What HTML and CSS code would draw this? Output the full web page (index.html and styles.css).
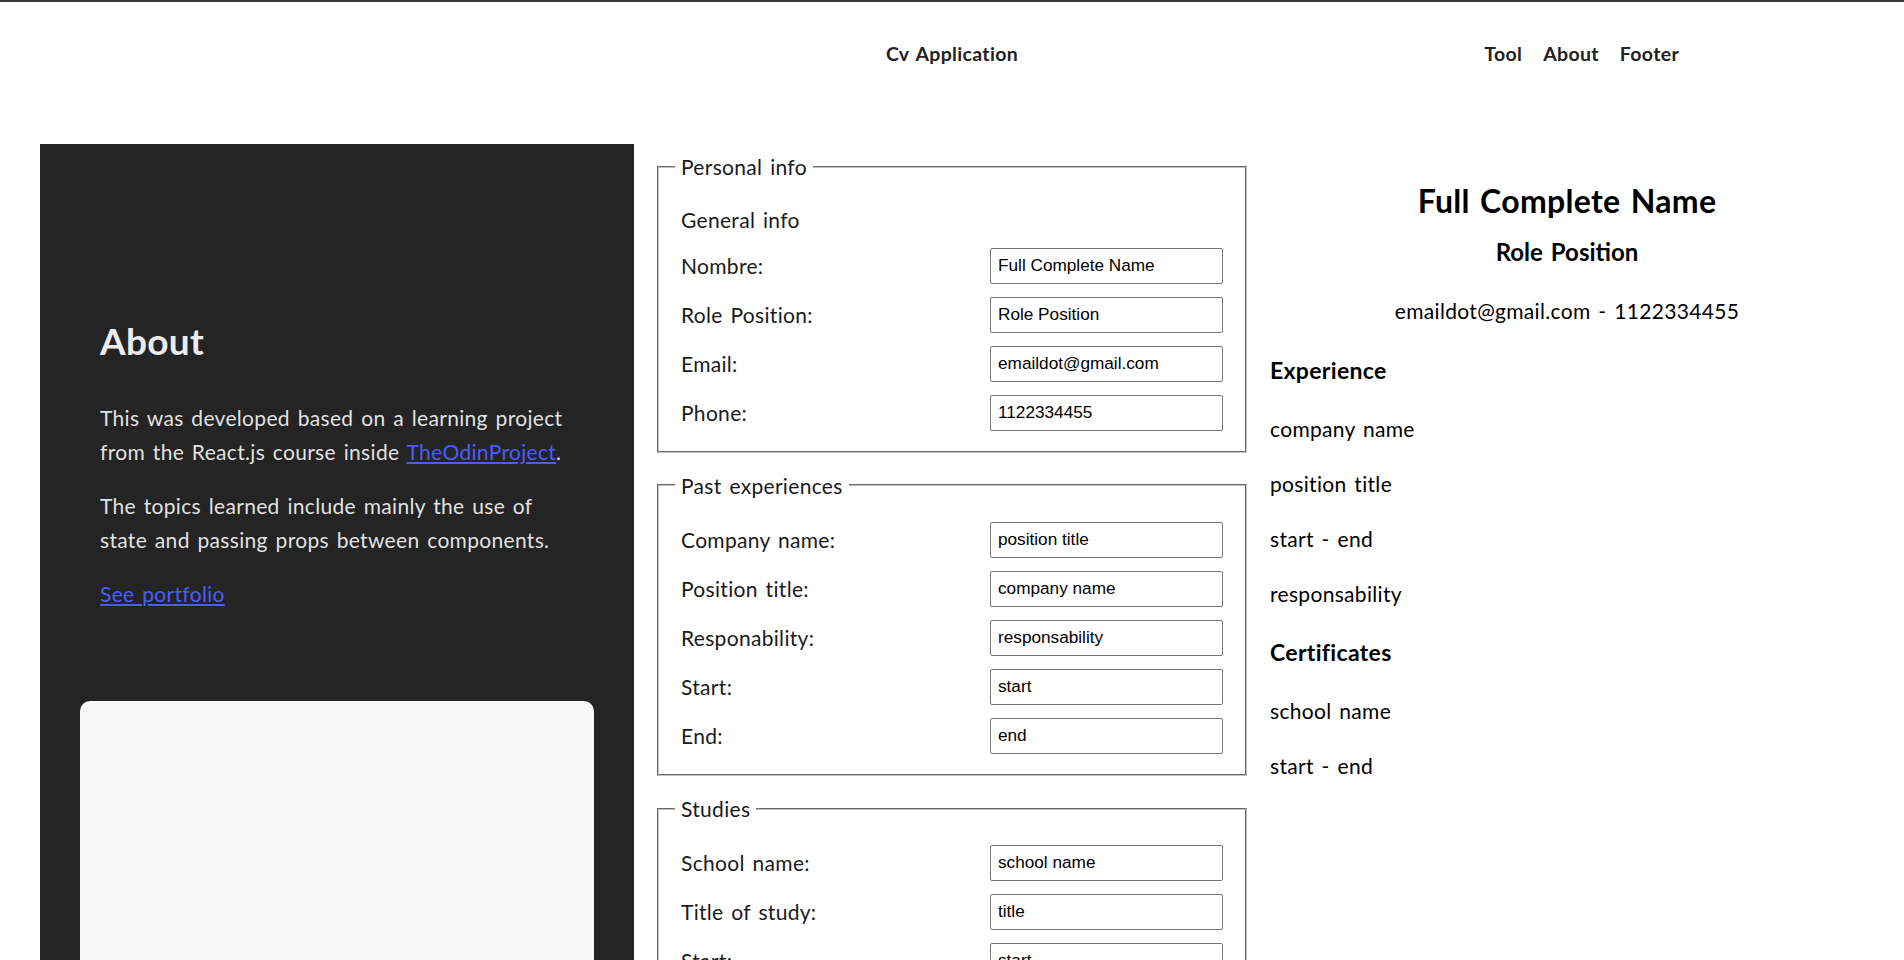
FILE: index.html
```html
<!DOCTYPE html>
<html lang="en">
<head>
<meta charset="utf-8">
<title>Cv Application</title>
<link rel="stylesheet" href="styles.css">
</head>
<body>
<header class="topbar">
  <div class="topbar-side"></div>
  <div class="topbar-title">Cv Application</div>
  <nav class="topbar-links">
    <a href="#tool">Tool</a>
    <a href="#about">About</a>
    <a href="#footer">Footer</a>
  </nav>
</header>

<main class="layout">
  <aside class="about" id="about">
    <div class="about-text">
      <h1 class="about-title">About</h1>
      <p>This was developed based on a learning project from the React.js course inside <a href="#odin">TheOdinProject</a>.</p>
      <p>The topics learned include mainly the use of state and passing props between components.</p>
      <p><a href="#portfolio">See portfolio</a></p>
    </div>
    <div class="about-card"></div>
  </aside>

  <section class="editor" id="tool">
    <fieldset class="group">
      <legend>Personal info</legend>
      <div class="group-body">
        <p class="group-sub">General info</p>
        <div class="rows">
          <label class="row"><span>Nombre:</span><input type="text" value="Full Complete Name"></label>
          <label class="row"><span>Role Position:</span><input type="text" value="Role Position"></label>
          <label class="row"><span>Email:</span><input type="text" value="emaildot@gmail.com"></label>
          <label class="row"><span>Phone:</span><input type="text" value="1122334455"></label>
        </div>
      </div>
    </fieldset>

    <fieldset class="group">
      <legend>Past experiences</legend>
      <div class="group-body">
        <div class="rows">
          <label class="row"><span>Company name:</span><input type="text" value="position title"></label>
          <label class="row"><span>Position title:</span><input type="text" value="company name"></label>
          <label class="row"><span>Responability:</span><input type="text" value="responsability"></label>
          <label class="row"><span>Start:</span><input type="text" value="start"></label>
          <label class="row"><span>End:</span><input type="text" value="end"></label>
        </div>
      </div>
    </fieldset>

    <fieldset class="group">
      <legend>Studies</legend>
      <div class="group-body">
        <div class="rows">
          <label class="row"><span>School name:</span><input type="text" value="school name"></label>
          <label class="row"><span>Title of study:</span><input type="text" value="title"></label>
          <label class="row"><span>Start:</span><input type="text" value="start"></label>
          <label class="row"><span>End:</span><input type="text" value="end"></label>
        </div>
      </div>
    </fieldset>
  </section>

  <section class="cv">
    <h1 class="cv-name">Full Complete Name</h1>
    <h2 class="cv-role">Role Position</h2>
    <p class="cv-contact">emaildot@gmail.com - 1122334455</p>
    <h3 class="cv-heading">Experience</h3>
    <p class="cv-item cv-first">company name</p>
    <p class="cv-item">position title</p>
    <p class="cv-item">start - end</p>
    <p class="cv-item">responsability</p>
    <h3 class="cv-heading">Certificates</h3>
    <p class="cv-item cv-first">school name</p>
    <p class="cv-item">start - end</p>
  </section>
</main>
</body>
</html>
```
FILE: styles.css
```css
* {
  box-sizing: border-box;
}

html, body {
  margin: 0;
  background: #ffffff;
}

body {
  font-family: Lato, "Open Sans", sans-serif;
  font-size: 21px;
  line-height: 1.6;
  letter-spacing: 0.015em;
  word-spacing: 0.1em;
  color: #1a1a1a;
  border-top: 2px solid #3a3a3a;
}

/* ---------- top bar ---------- */
.topbar {
  display: grid;
  grid-template-columns: repeat(3, 1fr);
  align-items: center;
  height: 103px;
  font-size: 19.5px;
  font-weight: 700;
  color: #222;
}

.topbar-title {
  text-align: center;
}

.topbar-links {
  display: flex;
  justify-content: center;
  gap: 21px;
  padding-right: 10px;
}

.topbar-links a {
  color: #222;
  text-decoration: none;
}

/* ---------- layout ---------- */
.layout {
  display: grid;
  grid-template-columns: repeat(3, 1fr);
  column-gap: 21px;
  padding: 0 40px;
  margin-top: 39px;
  align-items: start;
}

/* ---------- about panel ---------- */
.about {
  background: #242424;
  color: rgba(255, 255, 255, 0.88);
  padding: 178px 60px 0 60px;
  min-height: 900px;
}

.about-title {
  margin: 0 0 42px;
  font-size: 37px;
  line-height: 37px;
  font-weight: 700;
  color: #ececec;
}

.about-text p {
  margin: 0 0 21px;
}

.about-text p:last-child {
  margin-bottom: 0;
}

.about a {
  color: #4a5ef7;
  text-decoration: underline;
}

.about-card {
  margin: 90px -20px 0;
  height: 400px;
  background: #f7f7f7;
  border-radius: 10px;
}

/* ---------- editor ---------- */
.editor {
  padding-top: 6px;
}

.group {
  margin: 0 2px 16px;
  padding: 0 22px 20px;
  border: 2px groove #c0c0c0;
  min-width: 0;
}

.group legend {
  padding: 0 6px;
  margin-left: -6px;
  line-height: 33.6px;
}

.group-body {
  padding-top: 19.5px;
}

.group-sub {
  margin: 0 0 11px;
  line-height: 33.6px;
}

.rows {
  display: flex;
  flex-direction: column;
  gap: 13px;
}

.row {
  display: flex;
  align-items: center;
  justify-content: space-between;
  height: 36px;
}

.row input {
  width: 233px;
  height: 36px;
  padding: 0 7px;
  border: 1px solid #767676;
  border-radius: 2px;
  font-family: "Liberation Sans", Arial, sans-serif;
  font-size: 17.2px;
  letter-spacing: 0;
  word-spacing: 0;
  color: #000;
  background: #fff;
}

/* ---------- cv preview ---------- */
.cv {
  padding-top: 38px;
  color: #000;
}

.cv h1, .cv h2, .cv h3, .cv p {
  margin: 0;
}

.cv-name {
  text-align: center;
  font-size: 32px;
  line-height: 38px;
  font-weight: 700;
}

.cv-role {
  margin-top: 17px !important;
  text-align: center;
  font-size: 24px;
  line-height: 30px;
  font-weight: 700;
  letter-spacing: 0;
}

.cv-contact {
  margin-top: 27px !important;
  text-align: center;
  line-height: 33.6px;
}

.cv-heading {
  margin-top: 27px !important;
  font-size: 23px;
  line-height: 30px;
  font-weight: 700;
}

.cv-item {
  margin-top: 21.4px !important;
  line-height: 33.6px;
}

.cv-item.cv-first {
  margin-top: 27px !important;
}
```
